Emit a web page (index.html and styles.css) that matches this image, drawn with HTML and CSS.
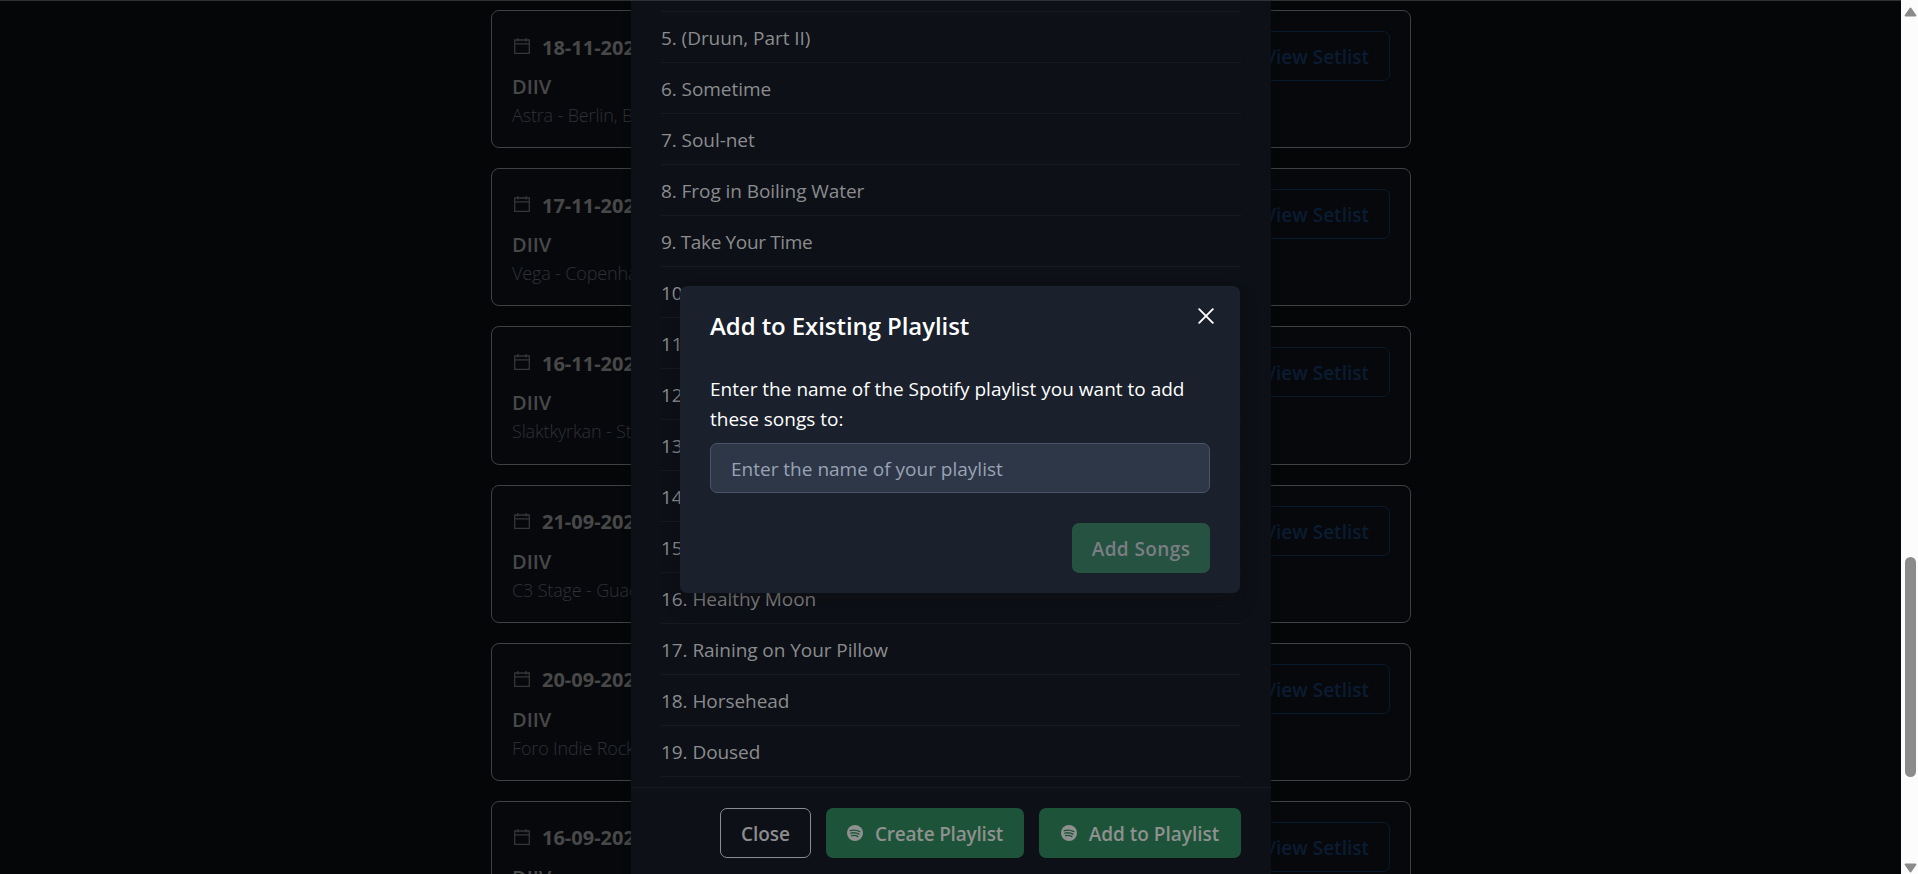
FILE: index.html
```html
<!DOCTYPE html>
<html lang="en">
<head>
<meta charset="utf-8">
<title>Setlists</title>
<link rel="stylesheet" href="styles.css">
</head>
<body>
<svg width="0" height="0" class="defs">
  <symbol id="cal" viewBox="0 0 18 18"><path d="M1.7 3h14.6v13.3H1.7zM1.7 6.8h14.6M4.9 1v3.4M13.1 1v3.4" fill="none" stroke="currentColor" stroke-width="1.3"/></symbol>
  <symbol id="spot" viewBox="0 0 16 16"><circle cx="8" cy="8" r="8" fill="currentColor"/><path d="M3.2 5.600c3.200-.9 6.700-.6 9.600 1M3.900 8.200c2.800-.8 5.600-.4 8 1M4.600 10.700c2.300-.6 4.400-.3 6.300.9" fill="none" stroke="#1d5338" stroke-width="1.35" stroke-linecap="round"/></symbol>
</svg>
<div class="screen">
  <main class="page">
    <article class="card"><div class="info"><div class="date"><svg class="cal"><use href="#cal"/></svg><b>18-11-2024</b></div><div class="artist">DIIV</div><div class="venue">Astra - Berlin, Be</div></div><span class="view">View Setlist</span></article>
    <article class="card"><div class="info"><div class="date"><svg class="cal"><use href="#cal"/></svg><b>17-11-2024</b></div><div class="artist">DIIV</div><div class="venue">Vega - Copenhagen</div></div><span class="view">View Setlist</span></article>
    <article class="card"><div class="info"><div class="date"><svg class="cal"><use href="#cal"/></svg><b>16-11-2024</b></div><div class="artist">DIIV</div><div class="venue">Slaktkyrkan - Sto</div></div><span class="view">View Setlist</span></article>
    <article class="card"><div class="info"><div class="date"><svg class="cal"><use href="#cal"/></svg><b>21-09-2024</b></div><div class="artist">DIIV</div><div class="venue">C3 Stage - Guada</div></div><span class="view">View Setlist</span></article>
    <article class="card"><div class="info"><div class="date"><svg class="cal"><use href="#cal"/></svg><b>20-09-2024</b></div><div class="artist">DIIV</div><div class="venue">Foro Indie Rocks</div></div><span class="view">View Setlist</span></article>
    <article class="card"><div class="info"><div class="date"><svg class="cal"><use href="#cal"/></svg><b>16-09-2024</b></div><div class="artist">DIIV</div></div><span class="view">View Setlist</span></article>
  </main>
  <section class="setlist">
    <ul class="songs">
      <li>5. (Druun, Part II)</li><li>6. Sometime</li><li>7. Soul-net</li><li>8. Frog in Boiling Water</li><li class="tight">9. Take Your Time</li><li>10. Oshin</li><li>11.</li><li>12.</li><li>13.</li><li>14.</li><li>15.</li><li>16. Healthy Moon</li><li>17. Raining on Your Pillow</li><li>18. Horsehead</li><li>19. Doused</li>
    </ul>
    <footer class="actions">
      <span class="btn close"><span>Close</span></span>
      <span class="btn create"><svg class="spot"><use href="#spot"/></svg><span>Create Playlist</span></span>
      <span class="btn add"><svg class="spot"><use href="#spot"/></svg><span>Add to Playlist</span></span>
    </footer>
  </section>
  <section class="dialog">
    <h2 class="title">Add to Existing Playlist</h2>
    <svg class="x" viewBox="0 0 16 16"><path d="M1.200 1.200l13.600 13.600M14.800 1.200L1.200 14.800" stroke="#fff" stroke-width="1.9" stroke-linecap="round"/></svg>
    <p class="prompt"><span>Enter the name of the Spotify playlist you want to add</span><br><span>these songs to:</span></p>
    <div class="field"><span>Enter the name of your playlist</span></div>
    <span class="submit"><span>Add Songs</span></span>
  </section>
  <div class="topline"></div>
</div>
<aside class="scrollbar">
  <svg class="arrow" viewBox="0 0 13 10"><path d="M6.500 1.500L11.400 8.500H1.600z" fill="#8b8b8b" stroke="#8b8b8b" stroke-width="2" stroke-linejoin="round"/></svg>
  <div class="thumb"></div>
  <svg class="arrow" viewBox="0 0 13 10"><path d="M6.500 8.500L11.400 1.500H1.600z" fill="#8b8b8b" stroke="#8b8b8b" stroke-width="2" stroke-linejoin="round"/></svg>
</aside>
</body>
</html>
```
FILE: styles.css
```css
* { box-sizing: border-box; }
body { margin: 0; display: flex; height: 874px; overflow: hidden; background: #050608; font-family: "Open Sans", "Noto Sans", sans-serif; font-size: 19px; }
.defs { position: absolute; }
.screen { position: relative; flex: 1; height: 874px; overflow: hidden; }
.topline { position: absolute; left: 0; top: 0; width: 100%; height: 1px; background: #303133; }
.page { width: 920px; margin-left: 491px; padding-top: 10px; display: flex; flex-direction: column; gap: 20px; }
.card { height: 138.200px; flex: none; border: 1px solid #404144; border-radius: 8px; background: #07080c; padding: 20px; display: flex; justify-content: space-between; align-items: flex-start; }
.info { white-space: nowrap; }
.date { display: flex; align-items: center; height: 30px; gap: 11px; padding-left: 1px; color: #484848; }
.date b { font-size: 20px; padding-top: 2px; }
.cal { width: 18px; height: 18px; color: #353637; }
.artist { margin-top: 11px; line-height: 30px; font-weight: 600; font-size: 20px; color: #484848; }
.venue { line-height: 26px; font-size: 18px; font-weight: 300; letter-spacing: -.15px; color: #2e3138; }
.view { width: 152px; height: 50px; border: 1px solid #091a2d; border-radius: 7px; color: #0a1c31; font-weight: 600; line-height: 51px; text-align: right; padding-right: 20px; white-space: nowrap; }
.setlist { position: absolute; left: 631px; top: 0; width: 640px; height: 874px; background: #0d1017; box-shadow: 0 0 8px rgba(0,0,0,.3); display: flex; flex-direction: column; }
.songs { margin: 11px 30px 0; padding: 0; list-style: none; border-top: 1px solid #161b23; height: 776px; overflow: hidden; letter-spacing: -.06px; }
.songs li { height: 51px; border-bottom: 1px solid #161b23; line-height: 53px; color: #8b8c8d; }
.songs .tight { letter-spacing: -.35px; }
.actions { height: 87px; border-top: 1px solid #161b23; padding: 20px 30px; display: flex; gap: 15px; justify-content: flex-end; }
.btn { height: 50px; border-radius: 7px; display: flex; align-items: center; justify-content: center; gap: 12px; background: #1d5338; color: #8e918f; font-weight: 600; white-space: nowrap; }
.btn span { padding-top: 1px; }
.close { width: 91px; background: none; border: 1px solid #8c8c8e; color: #8c8c8e; }
.create { width: 198px; letter-spacing: -.2px; }
.add { width: 202px; }
.spot { width: 16px; height: 16px; }
.dialog { position: absolute; left: 680px; top: 286px; width: 560px; height: 307px; border-radius: 7px; background: #1a202c; color: #fff; padding: 20px 30px; display: flex; flex-direction: column; box-shadow: 0 12px 18px rgba(18,18,18,.3), 0 4px 8px rgba(18,18,18,.2); }
.title { margin: 0; font-size: 24px; line-height: 40px; font-weight: 600; letter-spacing: -.08px; white-space: nowrap; }
.x { position: absolute; right: 26px; top: 22px; width: 16px; height: 16px; }
.prompt { margin: 28px 0 0; line-height: 30px; white-space: nowrap; }
.field { margin-top: 9px; height: 50px; flex: none; border: 1px solid #4a5568; border-radius: 7px; background: #2d3748; color: #99a3b4; line-height: 51px; padding-left: 20px; }
.submit { margin-top: 30px; align-self: flex-end; width: 138px; height: 50px; border-radius: 7px; background: #265242; color: #7b7e82; font-weight: 600; line-height: 52px; letter-spacing: .4px; text-align: center; }
.scrollbar { width: 17px; background: #fcfcfc; display: flex; flex-direction: column; align-items: center; padding: 7px 0 1px; }
.arrow { width: 13px; height: 10px; margin-left: 1px; flex: none; }
.thumb { width: 11px; height: 220px; margin: 540px 0 auto 2px; border-radius: 6px; background: #8b8b8b; }
```
